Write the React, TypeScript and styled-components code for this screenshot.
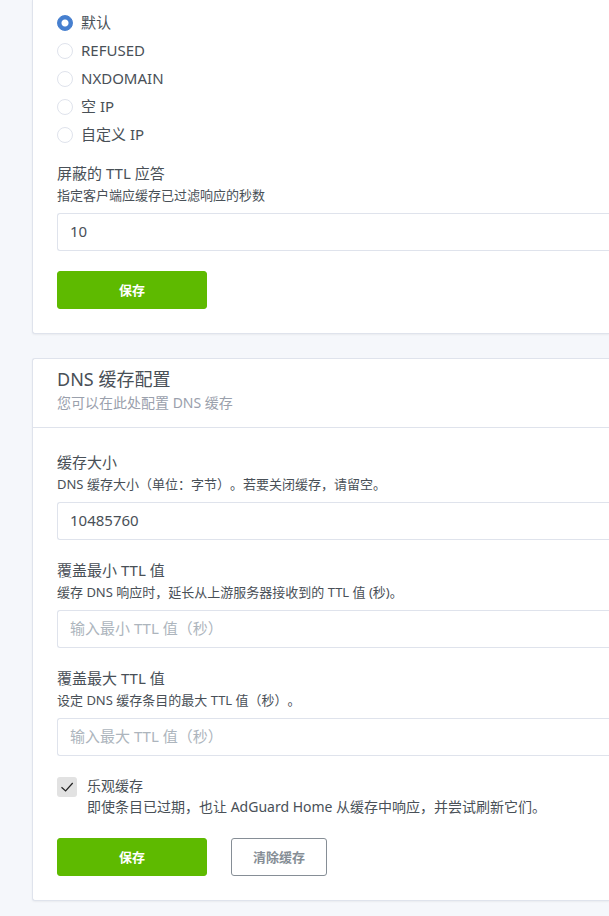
import { useState } from "react";
import styled, { createGlobalStyle } from "styled-components";

const GlobalStyle = createGlobalStyle`
  *, *::before, *::after { box-sizing: border-box; }
  body {
    margin: 0;
    background: #f5f7fb;
    color: #495057;
    font-family: "Noto Sans", "Noto Sans CJK SC", sans-serif;
    font-size: 15px;
    line-height: 22px;
    text-spacing-trim: space-all;
  }
  button, input { font-family: inherit; }
`;

const Page = styled.main`
  display: flex;
  flex-direction: column;
  gap: 24px;
  padding: 0 0 15px 32px;
  overflow: hidden;
`;

const Card = styled.section<{ $continued?: boolean }>`
  background: #fff;
  border: 1px solid #dfe3ec;
  border-right: 0;
  border-top-width: ${(p) => (p.$continued ? "0" : "1px")};
  border-radius: ${(p) => (p.$continued ? "0 0 0 3px" : "3px 0 0 3px")};
  box-shadow: 0 1px 2px rgba(0, 0, 0, 0.05);
`;

const CardHeader = styled.header`
  padding: 9px 24px 13px;
  border-bottom: 1px solid #dfe3ec;
`;

const Title = styled.h2`
  margin: 0 0 2px;
  font-size: 18px;
  font-weight: 400;
  line-height: 22px;
`;

const Subtitle = styled.p`
  margin: 0;
  font-size: 14px;
  color: #9aa0ac;
`;

const Form = styled.form<{ $top: number }>`
  display: flex;
  flex-direction: column;
  padding: ${(p) => p.$top}px 0 24px 24px;
`;

const RadioGroup = styled.fieldset`
  display: flex;
  flex-direction: column;
  align-items: flex-start;
  margin: 0 0 13px;
  padding: 0;
  border: 0;
`;

const RadioLabel = styled.label`
  display: flex;
  align-items: center;
  gap: 8px;
  height: 28px;
`;

const RadioText = styled.span`
  padding-bottom: 2px;
`;

const Radio = styled.input`
  appearance: none;
  width: 16px;
  height: 16px;
  margin: 0;
  border: 1px solid #dfe3ec;
  border-radius: 50%;
  background: #fff;
  &:checked {
    border-color: #467fcf;
    background: radial-gradient(circle, #fff 0 3px, #467fcf 4px);
  }
`;

const Fields = styled.div<{ $gapAfter: number }>`
  display: flex;
  flex-direction: column;
  gap: 19px;
  margin-bottom: ${(p) => p.$gapAfter}px;
`;

const FieldBox = styled.div`
  display: flex;
  flex-direction: column;
`;

const Hint = styled.span`
  margin-bottom: 7px;
  font-size: 13px;
`;

const Input = styled.input`
  width: 100%;
  height: 38px;
  padding: 5px 12px 7px;
  border: 1px solid #dfe3ec;
  border-right: 0;
  border-radius: 3px 0 0 3px;
  outline: 0;
  background: #fff;
  color: #495057;
  font-size: 15px;
  line-height: 24px;
  text-spacing-trim: space-all;
  &::placeholder { color: #adb5bd; opacity: 1; }
`;

const CheckLabel = styled.label`
  display: flex;
  align-items: flex-start;
  gap: 10px;
  margin-bottom: 21px;
  font-size: 14px;
  line-height: 21px;
`;

const CheckFrame = styled.span`
  display: grid;
  flex: none;
  width: 20px;
  height: 20px;
  margin-top: 2px;
  place-items: center;
  > * { grid-area: 1 / 1; }
`;

const Checkbox = styled.input`
  appearance: none;
  width: 20px;
  height: 20px;
  margin: 0;
  border-radius: 3px;
  background: #e2e2e2;
  & + svg { visibility: hidden; pointer-events: none; }
  &:checked + svg { visibility: visible; }
`;

const CheckText = styled.span`
  display: flex;
  flex-direction: column;
`;

const Actions = styled.div`
  display: flex;
  gap: 24px;
`;

const Button = styled.button<{ $outline?: boolean }>`
  min-width: ${(p) => (p.$outline ? "96px" : "150px")};
  height: 38px;
  padding: 6px 20px;
  border: 1px solid ${(p) => (p.$outline ? "#868e96" : "#5eba00")};
  border-radius: 3px;
  background: ${(p) => (p.$outline ? "#fff" : "#5eba00")};
  color: ${(p) => (p.$outline ? "#868e96" : "#fff")};
  font-size: 13px;
  font-weight: 700;
  line-height: 22px;
  white-space: nowrap;
`;

type FieldProps = {
  id: string;
  label: string;
  hint: string;
  value?: string;
  placeholder?: string;
};

function Field({ id, label, hint, value, placeholder }: FieldProps) {
  return (
    <FieldBox>
      <label htmlFor={id}>{label}</label>
      <Hint id={`${id}-hint`}>{hint}</Hint>
      <Input id={id} aria-describedby={`${id}-hint`} defaultValue={value} placeholder={placeholder} />
    </FieldBox>
  );
}

const modes = ["默认", "REFUSED", "NXDOMAIN", "空 IP", "自定义 IP"];

export default function App() {
  const [mode, setMode] = useState(modes[0]);
  const [optimistic, setOptimistic] = useState(true);

  return (
    <>
      <GlobalStyle />
      <Page>
        <Card $continued>
          <Form $top={9} onSubmit={(e) => e.preventDefault()}>
            <RadioGroup>
              {modes.map((m) => (
                <RadioLabel key={m}>
                  <Radio type="radio" name="mode" checked={mode === m} onChange={() => setMode(m)} />
                  <RadioText>{m}</RadioText>
                </RadioLabel>
              ))}
            </RadioGroup>
            <Fields $gapAfter={20}>
              <Field id="blocked-ttl" label="屏蔽的 TTL 应答" hint="指定客户端应缓存已过滤响应的秒数" value="10" />
            </Fields>
            <Actions>
              <Button type="submit">保存</Button>
            </Actions>
          </Form>
        </Card>
        <Card>
          <CardHeader>
            <Title>DNS 缓存配置</Title>
            <Subtitle>您可以在此处配置 DNS 缓存</Subtitle>
          </CardHeader>
          <Form $top={23} onSubmit={(e) => e.preventDefault()}>
            <Fields $gapAfter={19}>
              <Field id="cache-size" label="缓存大小" hint="DNS 缓存大小（单位：字节）。若要关闭缓存，请留空。" value="10485760" />
              <Field id="min-ttl" label="覆盖最小 TTL 值" hint="缓存 DNS 响应时，延长从上游服务器接收到的 TTL 值 (秒)。" placeholder="输入最小 TTL 值（秒）" />
              <Field id="max-ttl" label="覆盖最大 TTL 值" hint="设定 DNS 缓存条目的最大 TTL 值（秒）。" placeholder="输入最大 TTL 值（秒）" />
            </Fields>
            <CheckLabel>
              <CheckFrame>
                <Checkbox type="checkbox" checked={optimistic} onChange={(e) => setOptimistic(e.target.checked)} />
                <svg width="20" height="20" viewBox="0 0 20 20" fill="none" stroke="#222" strokeWidth="1.2" aria-hidden="true">
                  <path d="M4.5 10.2 8.6 14 15.7 6" />
                </svg>
              </CheckFrame>
              <CheckText>
                <span>乐观缓存</span>
                <span>即使条目已过期，也让 AdGuard Home 从缓存中响应，并尝试刷新它们。</span>
              </CheckText>
            </CheckLabel>
            <Actions>
              <Button type="submit">保存</Button>
              <Button type="button" $outline>清除缓存</Button>
            </Actions>
          </Form>
        </Card>
      </Page>
    </>
  );
}
